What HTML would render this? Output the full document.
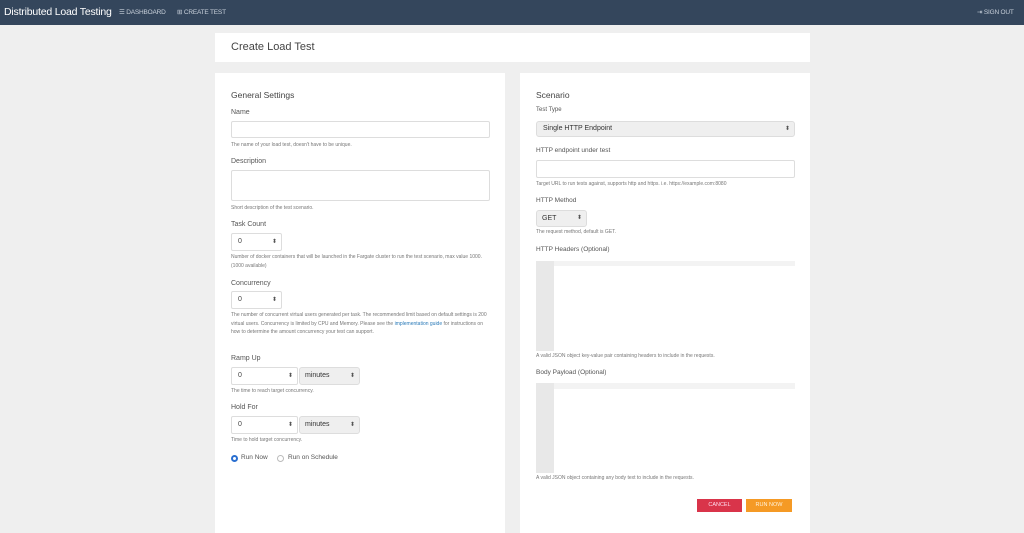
<!DOCTYPE html>
<html><head><meta charset="utf-8"><style>
*{box-sizing:border-box;margin:0;padding:0}
body{width:1024px;height:524px;overflow:hidden;background:#efefef;font-family:"Liberation Sans",sans-serif;color:#555;position:relative}
.nav{position:absolute;left:0;top:0;width:1024px;height:25px;background:#34465c;color:#fff}
.nav .b{position:absolute;left:4px;top:6px;font-size:10.5px;color:#fff;letter-spacing:-0.2px}
.nav .l{position:absolute;top:8px;font-size:6.5px;color:#c8d0da;letter-spacing:-0.2px}
.card{position:absolute;background:#fff}
.a{position:absolute;font-size:7px;color:#555}
.h{position:absolute;font-size:8.5px;color:#444}
.s{position:absolute;font-size:5px;color:#777;line-height:8.5px}
.in{position:absolute;border:1px solid #ddd;border-radius:2px;background:#fff;font-size:7px;color:#444;padding:0 6px;line-height:16px}
.sel{position:absolute;border:1px solid #ddd;border-radius:3px;background:#efefef;font-size:7px;color:#333;padding:0 5px;line-height:15px}
.arr{position:absolute;right:4px;top:0;font-size:6px;color:#555}
</style></head><body>
<div class="nav"><div class="b">Distributed Load Testing</div>
<div class="l" style="left:119px">☰ DASHBOARD</div>
<div class="l" style="left:177px">⊞ CREATE TEST</div>
<div class="l" style="left:977px">⇥ SIGN OUT</div></div>

<div class="card" style="left:215px;top:33px;width:595px;height:29px"><div style="position:absolute;left:16px;top:8px;font-size:11px;color:#444">Create Load Test</div></div>

<div class="card" style="left:215px;top:73px;width:290px;height:460px">
<div class="h" style="left:16px;top:17px">General Settings</div>
<div class="a" style="left:16px;top:36px">Name</div>
<div class="in" style="left:16px;top:48px;width:259px;height:17px"></div>
<div class="s" style="left:16px;top:68px">The name of your load test, doesn't have to be unique.</div>
<div class="a" style="left:16px;top:85px">Description</div>
<div class="in" style="left:16px;top:97px;width:259px;height:31px"></div>
<div class="s" style="left:16px;top:131px">Short description of the test scenario.</div>
<div class="a" style="left:16px;top:148px">Task Count</div>
<div class="in" style="left:16px;top:160px;width:51px;height:18px">0<span class="arr">⬍</span></div>
<div class="s" style="left:16px;top:180px;width:260px">Number of docker containers that will be launched in the Fargate cluster to run the test scenario, max value 1000. (1000 available)</div>
<div class="a" style="left:16px;top:207px">Concurrency</div>
<div class="in" style="left:16px;top:218px;width:51px;height:18px">0<span class="arr">⬍</span></div>
<div class="s" style="left:16px;top:238px;width:262px">The number of concurrent virtual users generated per task. The recommended limit based on default settings is 200 virtual users. Concurrency is limited by CPU and Memory. Please see the <span style="color:#2a7ab8">implementation guide</span> for instructions on how to determine the amount concurrency your test can support.</div>
<div class="a" style="left:16px;top:282px">Ramp Up</div>
<div class="in" style="left:16px;top:294px;width:67px;height:18px">0<span class="arr">⬍</span></div>
<div class="sel" style="left:84px;top:294px;width:61px;height:18px;line-height:16px">minutes<span class="arr">⬍</span></div>
<div class="s" style="left:16px;top:314px">The time to reach target concurrency.</div>
<div class="a" style="left:16px;top:331px">Hold For</div>
<div class="in" style="left:16px;top:343px;width:67px;height:18px">0<span class="arr">⬍</span></div>
<div class="sel" style="left:84px;top:343px;width:61px;height:18px;line-height:16px">minutes<span class="arr">⬍</span></div>
<div class="s" style="left:16px;top:363px">Time to hold target concurrency.</div>
<div style="position:absolute;left:16px;top:382px;width:7px;height:7px;border-radius:50%;border:2px solid #2a6fd0"></div>
<div class="a" style="left:26px;top:381px;font-size:6.5px">Run Now</div>
<div style="position:absolute;left:62px;top:382px;width:7px;height:7px;border-radius:50%;border:1px solid #bbb"></div>
<div class="a" style="left:73px;top:381px;font-size:6.5px">Run on Schedule</div>
</div>

<div class="card" style="left:520px;top:73px;width:290px;height:460px">
<div class="h" style="left:16px;top:17px">Scenario</div>
<div class="a" style="left:16px;top:34px;font-size:6px">Test Type</div>
<div class="sel" style="left:16px;top:48px;width:259px;height:16px;padding:0 6px;line-height:14px">Single HTTP Endpoint<span class="arr">⬍</span></div>
<div class="a" style="left:16px;top:74px;font-size:6.5px">HTTP endpoint under test</div>
<div class="in" style="left:16px;top:87px;width:259px;height:18px"></div>
<div class="s" style="left:16px;top:107px">Target URL to run tests against, supports http and https. i.e. https://example.com:8080</div>
<div class="a" style="left:16px;top:124px;font-size:6.5px">HTTP Method</div>
<div class="sel" style="left:16px;top:137px;width:51px;height:17px">GET<span class="arr">⬍</span></div>
<div class="s" style="left:16px;top:155px">The request method, default is GET.</div>
<div class="a" style="left:16px;top:173px;font-size:6.5px">HTTP Headers (Optional)</div>
<div style="position:absolute;left:16px;top:188px;width:259px;height:5px;background:#f3f3f3"></div>
<div style="position:absolute;left:16px;top:188px;width:18px;height:90px;background:#e8e8e8"></div>
<div class="s" style="left:16px;top:279px">A valid JSON object key-value pair containing headers to include in the requests.</div>
<div class="a" style="left:16px;top:296px;font-size:6.5px">Body Payload (Optional)</div>
<div style="position:absolute;left:16px;top:310px;width:259px;height:6px;background:#f3f3f3"></div>
<div style="position:absolute;left:16px;top:310px;width:18px;height:90px;background:#e8e8e8"></div>
<div class="s" style="left:16px;top:401px">A valid JSON object containing any body text to include in the requests.</div>
<div style="position:absolute;left:177px;top:426px;width:45px;height:13px;background:#d9344a;color:#fde;font-size:5.5px;text-align:center;line-height:13px">CANCEL</div>
<div style="position:absolute;left:226px;top:426px;width:46px;height:13px;background:#f59a25;color:#fff3dd;font-size:5.5px;text-align:center;line-height:13px">RUN NOW</div>
</div>
</body></html>
